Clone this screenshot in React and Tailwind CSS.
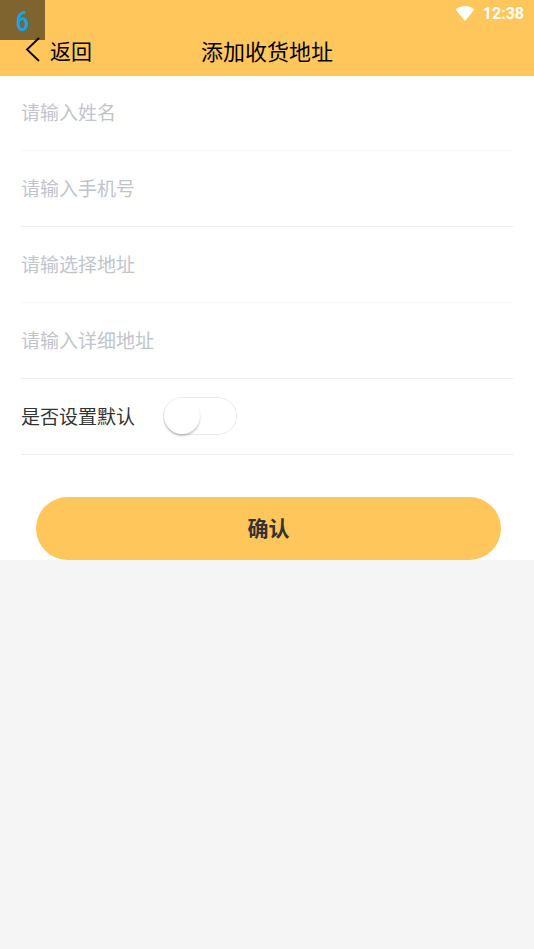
import { useState } from 'react'

const FIELDS = [
  { name: 'name', placeholder: '请输入姓名', type: 'text' },
  { name: 'phone', placeholder: '请输入手机号', type: 'tel' },
  { name: 'region', placeholder: '请输选择地址', type: 'text' },
  { name: 'detail', placeholder: '请输入详细地址', type: 'text' },
]

function StatusBar() {
  return (
    <div className="flex h-7 items-center justify-end gap-2 pr-2.5 text-white">
      <svg width="20" height="16" viewBox="0 0 20 16" fill="currentColor" aria-hidden="true">
        <path d="M10 15 0.5 3.5C3 1.3 6.3 0 10 0S17 1.3 19.5 3.5Z" />
      </svg>
      <span className="font-['Roboto',sans-serif] text-[16px] leading-5 font-bold">12:38</span>
    </div>
  )
}

function NavBar() {
  return (
    <div className="relative z-10 grid h-12 grid-cols-[1fr_auto_1fr] items-center px-6 pb-1 text-black">
      <button type="button" className="flex items-center gap-2 justify-self-start text-[21px] leading-6">
        <svg width="18" height="26" viewBox="0 0 18 26" fill="none" stroke="currentColor" strokeWidth="1.8" aria-hidden="true">
          <path d="M15 1 3 12.5 15 24" />
        </svg>
        返回
      </button>
      <h1 className="text-[22px] leading-6">添加收货地址</h1>
    </div>
  )
}

export default function App() {
  const [form, setForm] = useState({ name: '', phone: '', region: '', detail: '' })
  const [isDefault, setIsDefault] = useState(false)

  function handleChange(e) {
    setForm({ ...form, [e.target.name]: e.target.value })
  }

  return (
    <div className="min-h-screen bg-[#f5f5f5] font-['Noto_Sans_CJK_SC',sans-serif]">
      <header className="relative bg-[#ffc65b]">
        <div className="absolute top-0 left-0 flex h-10 w-[45px] items-center justify-center bg-[#7f642f] pt-1 font-['Roboto_Condensed','Roboto',sans-serif] text-[28px] leading-9 font-medium text-[#12a4ea]">
          6
        </div>
        <StatusBar />
        <NavBar />
      </header>

      <form className="-mt-px bg-white" onSubmit={(e) => e.preventDefault()}>
        <div className="px-[21px]">
          {FIELDS.map((f) => (
            <div key={f.name} className="flex h-19 border-b border-[#ececec] pb-0.5 odd:border-[#f7f7f7]">
              <input
                type={f.type}
                name={f.name}
                value={form[f.name]}
                onChange={handleChange}
                placeholder={f.placeholder}
                aria-label={f.placeholder}
                className="w-full bg-transparent text-[19px] leading-6 text-[#333] outline-none placeholder:text-[#c0c4cc]"
              />
            </div>
          ))}
          <div className="flex h-19 items-center gap-7 border-b border-[#eee] pb-0.5">
            <label htmlFor="is-default" className="text-[19px] leading-6 text-[#333]">
              是否设置默认
            </label>
            <input
              id="is-default"
              type="checkbox"
              role="switch"
              checked={isDefault}
              onChange={(e) => setIsDefault(e.target.checked)}
              className="h-[38px] w-[74px] appearance-none rounded-full border border-[#ebebeb] bg-white before:block before:size-9 before:rounded-full before:bg-white before:shadow-[0_2px_2px_rgba(0,0,0,0.22)] checked:bg-[#ffc65b] checked:before:ml-9"
            />
          </div>
        </div>
        <div className="pt-[42px] pr-[33px] pl-9">
          <button
            type="submit"
            className="block h-[63px] w-full rounded-full bg-[#ffc65b] pb-1 text-[21px] leading-6 font-bold text-[#333]"
          >
            确认
          </button>
        </div>
      </form>
    </div>
  )
}
